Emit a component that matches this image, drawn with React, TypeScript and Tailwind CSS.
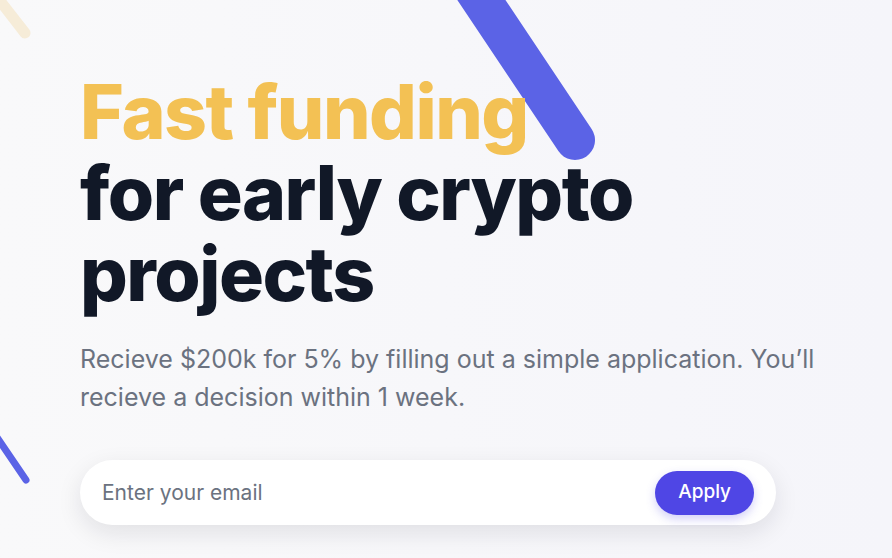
export default function App() {
  return (
    <div
      className="relative h-[558px] w-[892px] overflow-hidden bg-gradient-to-r from-[#f9f9fa] to-[#f5f5fa]"
      style={{ fontFamily: "Inter, 'Noto Sans', sans-serif" }}
    >
      {/* decorative strokes */}
      <svg className="pointer-events-none absolute left-0 top-0" width="892" height="558">
        <line x1="468" y1="-20" x2="575" y2="140" stroke="#5b63e6" strokeWidth="40" strokeLinecap="round" />
        <line x1="-10" y1="-12" x2="25" y2="33" stroke="#f6ecd8" strokeWidth="11" strokeLinecap="round" />
        <line x1="-10" y1="427" x2="26" y2="480" stroke="#5b63e6" strokeWidth="7" strokeLinecap="round" />
      </svg>

      <div className="relative flex flex-col pl-20 pt-[71px]">
        <h1 className="text-[75px] font-extrabold leading-[81px] tracking-[-0.02em] text-[#111827]">
          <span className="block text-[#f3c154]">Fast funding</span>
          for early crypto
          <br />
          projects
        </h1>

        <p className="mt-[26px] max-w-3xl text-[25px] leading-[38px] text-[#6b7280]">
          Recieve $200k for 5% by filling out a simple application. You’ll recieve a decision within 1 week.
        </p>

        <form
          onSubmit={(e) => e.preventDefault()}
          className="mt-[44px] flex h-[65px] w-[696px] items-center rounded-full bg-white pl-[22px] pr-[22px] shadow-[0_8px_24px_rgba(17,24,39,0.10)]"
        >
          <input
            type="email"
            placeholder="Enter your email"
            className="flex-1 bg-transparent text-[21px] text-[#111827] outline-none placeholder:text-[#6b7280]"
          />
          <button
            type="submit"
            className="h-[44px] rounded-full bg-[#4f46e5] px-[23px] text-[19px] font-medium text-white shadow-[0_4px_10px_rgba(79,70,229,0.25)]"
          >
            Apply
          </button>
        </form>
      </div>
    </div>
  );
}
